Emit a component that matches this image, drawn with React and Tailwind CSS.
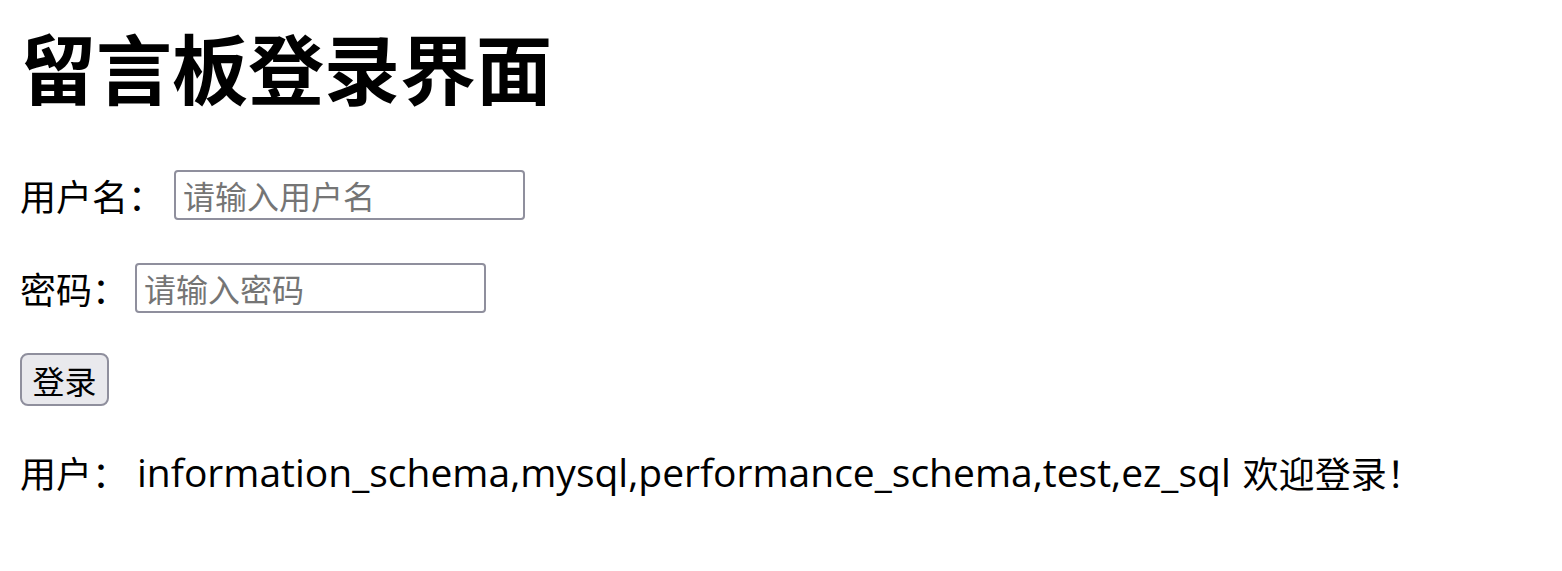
export default function App() {
  const cjk = { fontFamily: '"Noto Sans CJK SC", sans-serif' };
  return (
    <div
      className="min-h-[571px] bg-white pl-[20px] text-black"
      style={cjk}
    >
      <h1 className="pt-[21px] text-[76px] font-bold leading-[90px]">留言板登录界面</h1>

      <div className="mt-[59px] flex h-[50px] items-center text-[36px]">
        <span>用户名：</span>
        <input
          type="text"
          placeholder="请输入用户名"
          className="ml-[10px] h-[50px] w-[351px] rounded-[4px] border-2 border-[#8f8f9d] px-[7px] text-[32px] placeholder:text-[#757575]"
        />
      </div>

      <div className="mt-[43px] flex h-[50px] items-center text-[36px]">
        <span>密码：</span>
        <input
          type="password"
          placeholder="请输入密码"
          className="ml-[7px] h-[50px] w-[351px] rounded-[4px] border-2 border-[#8f8f9d] px-[7px] text-[32px] placeholder:text-[#757575]"
        />
      </div>

      <button className="mt-[40px] flex h-[53px] w-[89px] items-center justify-center rounded-[8px] border-2 border-[#8f8f9d] bg-[#e9e9ed] text-[32px]">
        登录
      </button>

      <p className="mt-[41px] flex h-[50px] items-center text-[36px] whitespace-nowrap">
        <span>用户：</span>
        <span className="ml-[9px] text-[39px]" style={{ fontFamily: '"Open Sans", sans-serif' }}>
          information_schema,mysql,performance_schema,test,ez_sql
        </span>
        <span className="ml-[12px]">欢迎登录！</span>
      </p>
    </div>
  );
}
